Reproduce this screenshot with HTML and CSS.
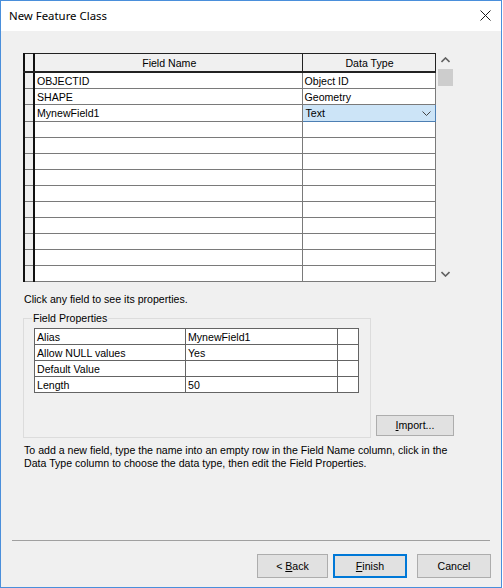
FILE: index.html
```html
<!DOCTYPE html>
<html>
<head>
<meta charset="utf-8">
<link rel="stylesheet" href="styles.css">
</head>
<body>
<div class="window">
  <div class="titlebar">
    <span class="title">New Feature Class</span>
    <svg class="close" width="11" height="11" viewBox="0 0 11 11"><path d="M0.5 0.5 L10.5 10.5 M10.5 0.5 L0.5 10.5" stroke="#1a1a1a" stroke-width="1" fill="none"/></svg>
  </div>
  <div class="content">
    <div class="grid-area">
      <table class="grid">
        <colgroup><col class="c-rh"><col class="c-name"><col class="c-type"></colgroup>
        <thead>
          <tr><th class="rh"></th><th>Field Name</th><th>Data Type</th></tr>
        </thead>
        <tbody>
          <tr><td class="rh"></td><td>OBJECTID</td><td>Object ID</td></tr>
          <tr><td class="rh"></td><td>SHAPE</td><td>Geometry</td></tr>
          <tr><td class="rh"></td><td>MynewField1</td><td class="sel"><div class="combo"><span>Text</span><svg width="9" height="5" viewBox="0 0 9 5"><path d="M0.5 0.5 L4.5 4.5 L8.5 0.5" stroke="#444" stroke-width="1" fill="none"/></svg></div></td></tr>
          <tr><td class="rh"></td><td></td><td></td></tr>
          <tr><td class="rh"></td><td></td><td></td></tr>
          <tr><td class="rh"></td><td></td><td></td></tr>
          <tr><td class="rh"></td><td></td><td></td></tr>
          <tr><td class="rh"></td><td></td><td></td></tr>
          <tr><td class="rh"></td><td></td><td></td></tr>
          <tr><td class="rh"></td><td></td><td></td></tr>
          <tr><td class="rh"></td><td></td><td></td></tr>
          <tr><td class="rh"></td><td></td><td></td></tr>
          <tr><td class="rh"></td><td></td><td></td></tr>
        </tbody>
      </table>
      <div class="vscroll">
        <svg class="arrow" width="9" height="6" viewBox="0 0 9 6"><path d="M0.5 5 L4.5 1 L8.5 5" stroke="#606060" stroke-width="1.6" fill="none"/></svg>
        <div class="thumb"></div>
        <div class="track"></div>
        <svg class="arrow" width="9" height="6" viewBox="0 0 9 6"><path d="M0.5 1 L4.5 5 L8.5 1" stroke="#606060" stroke-width="1.6" fill="none"/></svg>
      </div>
    </div>
    <p class="hint">Click any field to see its properties.</p>
    <div class="props-row">
      <fieldset class="props">
        <legend>Field Properties</legend>
        <table class="ptable">
          <colgroup><col class="p-name"><col class="p-val"><col class="p-x"></colgroup>
          <tr><td>Alias</td><td>MynewField1</td><td></td></tr>
          <tr><td>Allow NULL values</td><td>Yes</td><td></td></tr>
          <tr><td>Default Value</td><td></td><td></td></tr>
          <tr><td>Length</td><td>50</td><td></td></tr>
        </table>
      </fieldset>
      <button class="btn import"><u>I</u>mport...</button>
    </div>
    <p class="desc">To add a new field, type the name into an empty row in the Field Name column, click in the<br>Data Type column to choose the data type, then edit the Field Properties.</p>
  </div>
  <div class="footer">
    <div class="sep"></div>
    <div class="buttons">
      <button class="btn back">&lt; <u>B</u>ack</button>
      <button class="btn default"><u>F</u>inish</button>
      <button class="btn cancel">Cancel</button>
    </div>
  </div>
</div>
</body>
</html>
```
FILE: styles.css
```css
* { box-sizing: border-box; }
html, body { margin: 0; padding: 0; background: #ffffff; }
body { width: 503px; height: 588px; overflow: hidden; font-family: "Liberation Sans", Arial, sans-serif; font-size: 10.6px; color: #000; }

.window {
  width: 502px;
  height: 588px;
  border: 1px solid #4a8fdb;
  background: #f0f0f0;
  display: flex;
  flex-direction: column;
}

.titlebar {
  height: 30px;
  background: #ffffff;
  display: flex;
  align-items: center;
  justify-content: space-between;
  padding: 0 9px 1px 8px;
  flex: none;
}
.title { font-family: "Noto Sans", "Open Sans", sans-serif; font-size: 11.4px; color: #000; }
.close { display: block; margin-right: 1px; }

.content { flex: 1; padding: 22px 0 0 22px; }

.grid-area { display: flex; align-items: flex-start; gap: 1px; }

.grid {
  border-collapse: collapse;
  table-layout: fixed;
  width: 411px;
  background: #ffffff;
}
.c-rh { width: 10px; }
.c-name { width: 268px; }
.c-type { width: 133px; }

.grid th, .grid td {
  padding: 1px 0 0 2px;
  border: 1px solid #7a7a7a;
  height: 16px;
  line-height: 14px;
  white-space: nowrap;
  font-weight: normal;
  text-align: left;
}
.grid th {
  height: 18px;
  background: #f0f0f0;
  text-align: center;
  border-top: 1px solid #222;
  border-bottom: 2px solid #222;
  border-right: 1px solid #222;
}
.grid .rh {
  background: #f0f0f0;
  border-left: 2px solid #111;
  border-right: 2px solid #111;
  padding: 0;
}
.grid td.sel { padding: 0; border: 1px solid #4d7fb3; background: #cce4f7; }
.combo { display: flex; align-items: center; justify-content: space-between; padding: 1px 4px 0 3px; height: 16px; }
.combo svg { display: block; }

.vscroll {
  width: 17px;
  height: 228px;
  display: flex;
  flex-direction: column;
  align-items: center;
}
.vscroll .arrow { display: block; margin: 4px 0 6px; }
.vscroll .arrow:last-child { margin: 6px 0 4px; }
.thumb { width: 15px; height: 17px; background: #cdcdcd; flex: none; }
.track { flex: 1; }

.hint { margin: 11px 0 0 1px; line-height: 13px; }

.props-row { display: flex; align-items: flex-end; margin-top: 6px; }

.props {
  margin: 0;
  width: 348px;
  height: 126px;
  border: 1px solid #dcdcdc;
  padding: 3px 0 0 10px;
  min-width: 0;
}
.props legend { padding: 0 1px; margin-left: -2px; line-height: 13px; }

.ptable { border-collapse: collapse; table-layout: fixed; width: 324px; background: #ffffff; }
.p-name { width: 151px; }
.p-val { width: 152px; }
.p-x { width: 21px; }
.ptable td { border: 1px solid #646464; height: 16px; padding: 1px 0 0 2px; line-height: 14px; white-space: nowrap; }

.btn {
  font-family: "Liberation Sans", Arial, sans-serif;
  font-size: 10.6px;
  color: #000;
  background: #e1e1e1;
  border: 1px solid #adadad;
  padding: 0;
  margin: 0;
}
.import { width: 78px; height: 21px; margin: 0 0 2px 5px; }

.desc { margin: 6px 0 0 1px; line-height: 13px; }

.footer { flex: none; padding: 0 10px 9px 11px; }
.sep { height: 1px; background: #a0a0a0; margin: 0 1px 13px 0; }
.buttons { display: flex; justify-content: flex-end; }
.buttons .btn { width: 74px; height: 24px; }
.buttons .back { width: 71px; }
.buttons .default { border: 2px solid #0078d7; margin-left: 5px; }
.buttons .cancel { margin-left: 10px; }
```
